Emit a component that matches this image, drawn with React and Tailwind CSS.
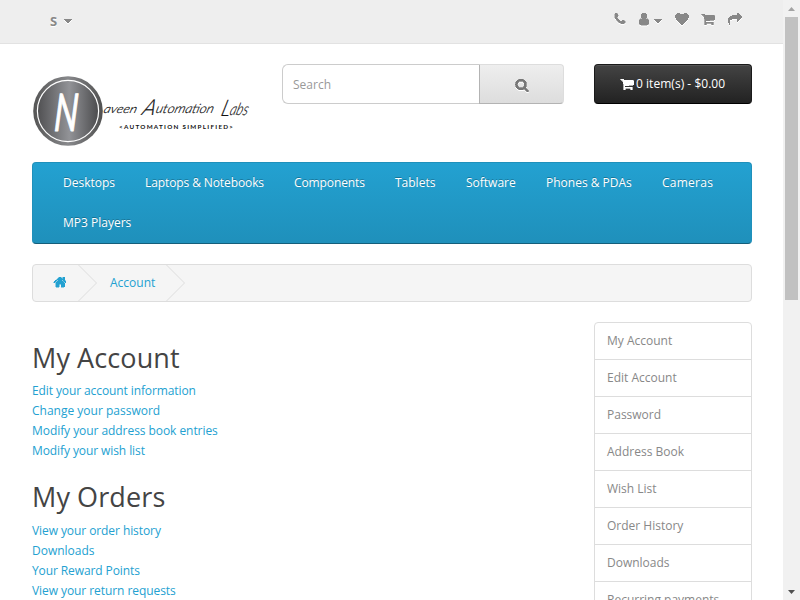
const ICONS = {
  phone: "M1600 1240q0 27-10 70.5t-21 68.5q-21 50-122 106-94 51-186 51-27 0-53-3.5t-57.5-12.5-47-14.5-55.5-20.5-49-18q-98-35-175-83-127-79-264-216t-216-264q-48-77-83-175-3-9-18-49t-20.5-55.5-14.5-47-12.5-57.5-3.5-53q0-92 51-186 56-101 106-122 25-11 68.5-21t70.5-10q14 0 21 3 18 6 53 76 11 19 30 54t35 63.5 31 53.5q3 4 17.5 25t21.5 35.5 7 28.5q0 20-28.5 50t-62 55-62 53-28.5 46q0 9 5 22.5t8.5 20.5 14 24 11.5 19q76 137 174 235t235 174q2 1 19 11.5t24 14 20.5 8.5 22.5 5q18 0 46-28.5t53-62 55-62 50-28.5q14 0 28.5 7t35.5 21.5 25 17.5q25 15 53.5 31t63.5 35 54 30q70 35 76 53 3 7 3 21z",
  user: "M1536 1399q0 109-62.5 187t-150.5 78h-854q-88 0-150.5-78t-62.5-187q0-85 8.5-160.5t31.5-152 58.5-131 94-89 134.5-34.5q131 128 313 128t313-128q76 0 134.5 34.5t94 89 58.5 131 31.5 152 8.5 160.5zm-256-887q0 159-112.5 271.5t-271.5 112.5-271.5-112.5-112.5-271.5 112.5-271.5 271.5-112.5 271.5 112.5 112.5 271.5z",
  heart: "M896 1664q-26 0-44-18l-624-602q-10-8-27.5-26t-55.5-65.5-68-97.5-53.5-121-23.5-138q0-220 127-344t351-124q62 0 126.5 21.5t120 58 95.5 68.5 76 68q36-36 76-68t95.5-68.5 120-58 126.5-21.5q224 0 351 124t127 344q0 221-229 450l-623 600q-18 18-44 18z",
  cart: "M704 1536q0 52-38 90t-90 38-90-38-38-90 38-90 90-38 90 38 38 90zm896 0q0 52-38 90t-90 38-90-38-38-90 38-90 90-38 90 38 38 90zm128-1088v512q0 24-16.5 42.5t-40.5 21.5l-1044 122q13 60 13 70 0 16-24 64h920q26 0 45 19t19 45-19 45-45 19h-1024q-26 0-45-19t-19-45q0-11 8-31.5t16-36 21.5-40 15.5-29.5l-177-823h-204q-26 0-45-19t-19-45 19-45 45-19h256q16 0 28.5 6.5t19.5 15.5 13 24.5 8 26 5.5 29.5 4.5 26h1201q26 0 45 19t19 45z",
  share: "M1792 640q0 26-19 45l-512 512q-19 19-45 19t-45-19-19-45v-256h-224q-98 0-175.5 6t-154 21.5-133 42.5-105.5 69.5-80 101-48.5 138.5-17.5 181q0 55 5 123 0 6 2.5 23.5t2.5 26.5q0 15-8.5 25t-23.5 10q-16 0-28-17-7-9-13-22t-13.5-30-10.5-24q-127-285-127-451 0-199 53-333 162-403 875-403h224v-256q0-26 19-45t45-19 45 19l512 512q19 19 19 45z",
  search: "M1216 832q0-185-131.5-316.5t-316.5-131.5-316.5 131.5-131.5 316.5 131.5 316.5 316.5 131.5 316.5-131.5 131.5-316.5zm512 832q0 52-38 90t-90 38q-54 0-90-38l-343-342q-179 124-399 124-143 0-273.5-55.5t-225-150-150-225-55.5-273.5 55.5-273.5 150-225 225-150 273.5-55.5 273.5 55.5 225 150 150 225 55.5 273.5q0 220-124 399l343 343q37 37 37 90z",
  home: "M1472 992v480q0 26-19 45t-45 19h-384v-384h-256v384h-384q-26 0-45-19t-19-45v-480q0-1 .5-3t.5-3l575-474 575 474q1 2 1 6zm223-69l-62 74q-8 9-21 11h-3q-13 0-21-7l-692-577-692 577q-12 8-24 7-13-2-21-11l-62-74q-8-10-7-23.5t11-21.5l719-599q32-26 76-26t76 26l244 204v-195q0-14 9-23t23-9h192q14 0 23 9t9 23v408l219 182q10 8 11 21.5t-7 23.5z",
  caret: "M1408 704q0 26-19 45l-448 448q-19 19-45 19t-45-19l-448-448q-19-19-19-45t19-45 45-19h896q26 0 45 19t19 45z",
};

function Icon({ name, className = "", bold = 0 }) {
  return (
    <svg viewBox="0 0 1792 1792" fill="currentColor" stroke={bold ? "currentColor" : "none"} strokeWidth={bold} shapeRendering="crispEdges" className={"size-3.5 shrink-0 overflow-visible " + className}>
      <path d={ICONS[name]} />
    </svg>
  );
}

function TopBar() {
  return (
    <div className="flex h-11 items-start justify-between border-b border-[#e2e2e2] bg-[#eeeeee] pr-[41px] pl-[50px] text-[#888]">
      <div className="flex pt-[11px]">
        <strong className="w-[15px] text-[13px] font-bold [text-shadow:0_1px_0_#fff]">S</strong>
        <Icon name="caret" className="mt-[3px] -ml-1 [filter:drop-shadow(0_1px_0_#fff)]" />
      </div>
      <div className="flex pt-3 [filter:drop-shadow(0_1px_0_#fff)]">
        <Icon name="phone" bold={60} className="mr-2.5" />
        <Icon name="user" bold={60} />
        <Icon name="caret" className="mt-0.5 mr-2.5" />
        <Icon name="heart" className="mr-3" />
        <Icon name="cart" bold={90} className="mr-[13px]" />
        <Icon name="share" />
      </div>
    </div>
  );
}

function Logo() {
  return (
    <svg width="250" height="98" viewBox="0 0 250 98" className="block">
      <defs>
        <linearGradient id="disc">
          <stop offset="0" stopColor="#505052" />
          <stop offset=".52" stopColor="#929397" />
          <stop offset="1" stopColor="#4b4b4d" />
        </linearGradient>
        <linearGradient id="rim">
          <stop offset="0" stopColor="#555" />
          <stop offset=".5" stopColor="#88898c" />
          <stop offset="1" stopColor="#505050" />
        </linearGradient>
      </defs>
      <circle cx="36" cy="47" r="34.8" fill="url(#rim)" />
      <circle cx="36" cy="47" r="30.6" fill="url(#disc)" stroke="#fff" strokeWidth="1.2" />
      <text transform="translate(21.5 66.5) skewX(-3)" fontFamily="Lato" fontSize="52" fontStyle="italic" textLength="24" lengthAdjust="spacingAndGlyphs" fill="#fff" stroke="#fff" strokeWidth="1" strokeLinejoin="round">N</text>
      <g fontFamily="Lato" fontStyle="italic" fontWeight="300" fill="#111" stroke="#111" strokeWidth=".2">
        <text transform="translate(71 49) skewX(-16)" fontSize="12" textLength="33" lengthAdjust="spacingAndGlyphs">aveen</text>
        <text transform="translate(109 51) skewX(-20)" fontSize="22" textLength="13" lengthAdjust="spacingAndGlyphs">A</text>
        <text transform="translate(123 49) skewX(-16)" fontSize="13" textLength="58" lengthAdjust="spacingAndGlyphs">utomation</text>
        <text transform="translate(188 52) skewX(-16)" fontSize="23" textLength="9" lengthAdjust="spacingAndGlyphs">L</text>
        <text transform="translate(197 50.5) skewX(-16)" fontSize="17" textLength="18" lengthAdjust="spacingAndGlyphs">abs</text>
      </g>
      <text x="87" y="65" fontFamily="Lato" fontSize="6.3" fontWeight="700" fill="#111" textLength="114">&lt;AUTOMATION SIMPLIFIED&gt;</text>
    </svg>
  );
}

const NAV = [
  ["Desktops", "w-[82px]"],
  ["Laptops & Notebooks", "w-[149px] tracking-[-0.1px]"],
  ["Components", "w-[101px] tracking-[-0.1px]"],
  ["Tablets", "w-[71px]"],
  ["Software", "w-[80px]"],
  ["Phones & PDAs", "w-[116px]"],
  ["Cameras", "w-[81px] tracking-[0.25px]"],
  ["MP3 Players", "w-[100px]"],
];
const ACCOUNT = [
  ["Edit your account information", "tracking-[-0.1px]"],
  ["Change your password", ""],
  ["Modify your address book entries", "tracking-[-0.06px]"],
  ["Modify your wish list", "tracking-[-0.09px]"],
];
const ORDERS = [
  ["View your order history", "tracking-[-0.08px]"],
  ["Downloads", ""],
  ["Your Reward Points", "tracking-[-0.1px]"],
  ["View your return requests", "tracking-[-0.07px]"],
];
const SIDE = ["My Account", "Edit Account", "Password", "Address Book", "Wish List", "Order History", "Downloads", "Recurring payments"];

function Section({ title, links, className }) {
  return (
    <section className={className}>
      <h2 className="text-[27px] leading-[29px] tracking-[0.1px] text-[#444]">{title}</h2>
      <ul className="text-[#23a1d1]">
        {links.map(([label, spacing]) => <li key={label} className={"h-5 " + spacing}>{label}</li>)}
      </ul>
    </section>
  );
}

function Crumb({ children, className }) {
  return (
    <li className={"flex h-9 items-center " + className}>
      {children}
      <svg viewBox="0 0 20 36" className="ml-auto h-9 w-5 shrink-0" fill="none" stroke="#dddddd">
        <path d="M.5 0 18.5 18 .5 36" />
      </svg>
    </li>
  );
}

function Scrollbar() {
  return (
    <div className="flex h-[600px] w-[17px] flex-col items-center bg-[#f1f1f1]">
      <div className="flex h-[17px] items-center">
        <svg width="7" height="4" viewBox="0 0 7 4" fill="#a3a3a3"><path d="M3.5 0 7 4H0z" /></svg>
      </div>
      <div className="h-[283px] w-[13px] bg-[#c1c1c1]" />
      <div className="mt-auto flex h-[17px] items-center">
        <svg width="7" height="4" viewBox="0 0 7 4" fill="#505050"><path d="M0 0h7L3.5 4z" /></svg>
      </div>
    </div>
  );
}

export default function App() {
  return (
    <div className="flex h-[600px] w-[800px] overflow-hidden bg-white font-['Open_Sans',sans-serif] text-[12px] leading-5 text-[#666]">
      <div className="h-[600px] w-[783px] overflow-hidden">
        <TopBar />
        <header className="flex h-[118px] pt-5 pl-8">
          <div className="w-[250px]"><Logo /></div>
          <div className="flex h-10 w-[282px]">
            <div className="flex w-[198px] items-center rounded-l-md border border-r-0 border-[#ccc] px-2.5 pt-0.5 text-[#999]">Search</div>
            <button className="flex w-[85px] items-center justify-center rounded-r-[4px] border border-[#ddd] border-b-[#b3b3b3] border-l-[#b3b3b3] bg-linear-to-b from-[#eeeeee] to-[#dddddd] pt-px text-[#777]">
              <Icon name="search" bold={90} className="[filter:drop-shadow(0_1px_0_#fff)]" />
            </button>
          </div>
          <div className="ml-[30px] flex h-10 w-[158px] items-center rounded-[4px] border border-[#1a1a1a] border-b-black bg-linear-to-b from-[#444] to-[#222] pl-[25px] text-white shadow-[inset_0_1px_0_#555]">
            <Icon name="cart" bold={80} className="mr-[2px]" />
            <span className="tracking-[0.03px] whitespace-nowrap">0 item(s) - $0.00</span>
          </div>
        </header>
        <nav className="ml-8 h-[82px] w-[720px] rounded-[4px] border border-[#1f90bb] border-b-[#145e7a] bg-linear-to-b from-[#23a1d1] to-[#1f90bb] pl-[15px]">
          <ul className="flex flex-wrap">
            {NAV.map(([label, size]) => (
              <li key={label} className={"py-2.5 pl-[15px] whitespace-nowrap text-white [text-shadow:0_-1px_0_rgba(0,0,0,0.25)] " + size}>{label}</li>
            ))}
          </ul>
        </nav>
        <ul className="mt-5 ml-8 flex h-[38px] w-[720px] overflow-hidden rounded-[4px] border border-[#ddd] bg-[#f5f5f5] text-[#23a1d1]">
          <Crumb className="w-[65px] pl-5"><Icon name="home" bold={60} className="-mt-0.5" /></Crumb>
          <Crumb className="w-[88px] pl-3">Account</Crumb>
        </ul>
        <div className="mt-5 ml-8 flex w-[720px]">
          <main className="flex w-[562px] flex-col gap-[21px] pt-[21px]">
            <Section title="My Account" links={ACCOUNT} className="flex flex-col gap-[9px]" />
            <Section title="My Orders" links={ORDERS} className="flex flex-col gap-2.5" />
          </main>
          <aside className="h-[400px] w-[158px] rounded-t-[4px] border border-[#ddd] text-[#888]">
            {SIDE.map((s) => <div key={s} className="h-[37px] border-b border-[#ddd] px-3 py-2">{s}</div>)}
          </aside>
        </div>
      </div>
      <Scrollbar />
    </div>
  );
}
